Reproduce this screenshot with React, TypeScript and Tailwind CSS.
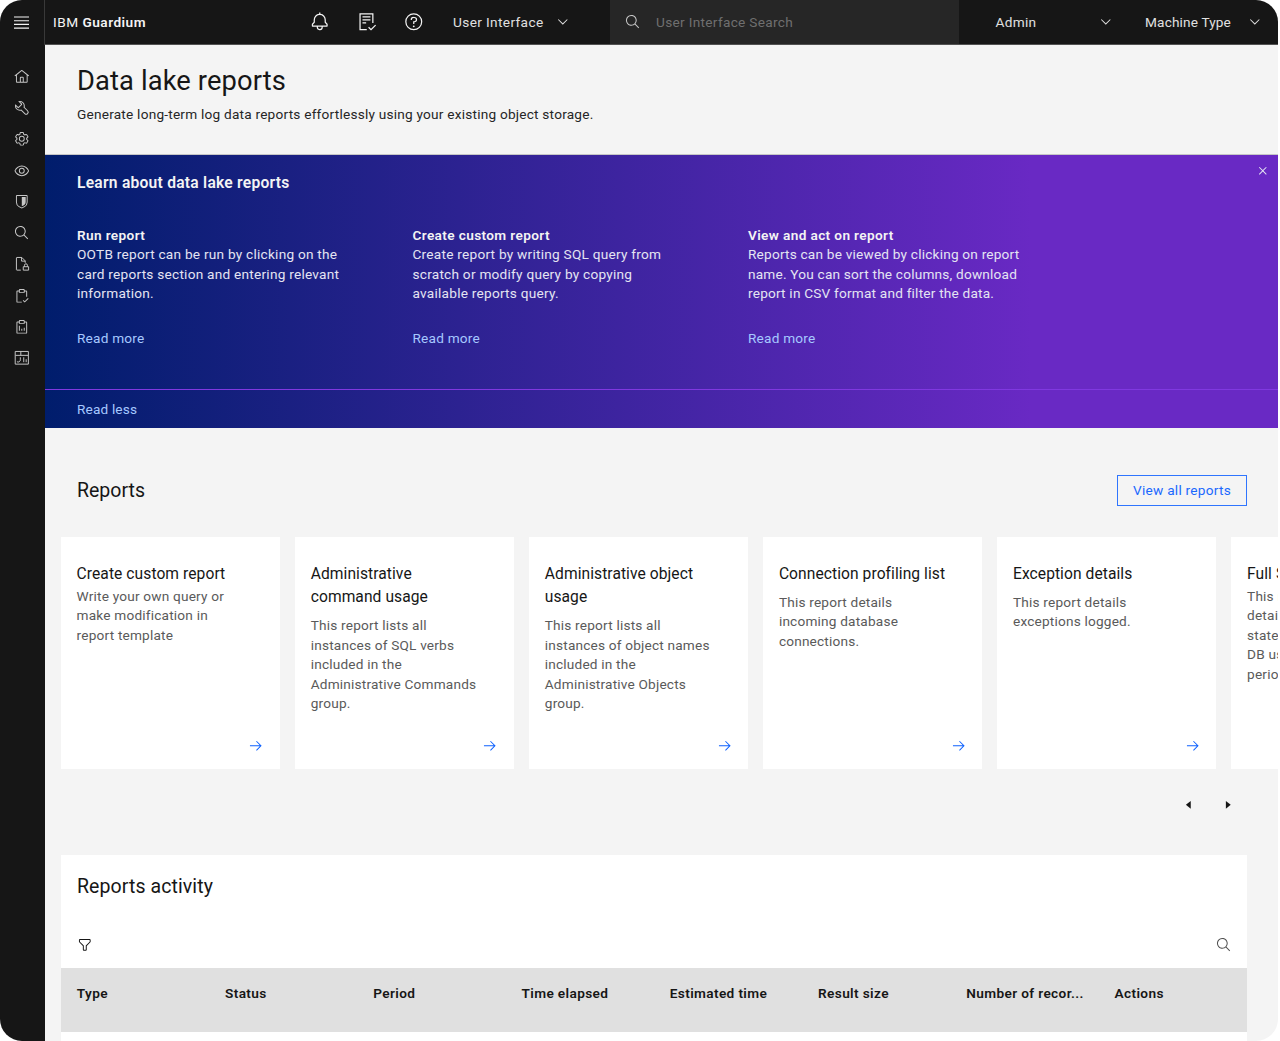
import type { ReactNode } from "react";

interface Report {
  title: string;
  description: string;
  tight?: boolean;
}

const lessons = [
  {
    title: "Run report",
    body: ["OOTB report can be run by clicking on the", "card reports section and entering relevant", "information."],
    bodyTracking: "tracking-[0.24px]",
  },
  {
    title: "Create custom report",
    body: ["Create report by writing SQL query from", "scratch or modify query by copying", "available reports query."],
    bodyTracking: "tracking-[0.24px]",
  },
  {
    title: "View and act on report",
    body: ["Reports can be viewed by clicking on report", "name. You can sort the columns, download", "report in CSV format and filter the data."],
    bodyTracking: "tracking-[0.2px]",
  },
];

const reports: Report[] = [
  { title: "Create custom report", description: "Write your own query or make modification in report template", tight: true },
  {
    title: "Administrative command usage",
    description: "This report lists all instances of SQL verbs included in the Administrative Commands group.",
  },
  {
    title: "Administrative object usage",
    description: "This report lists all instances of object names included in the Administrative Objects group.",
  },
  { title: "Connection profiling list", description: "This report details incoming database connections." },
  { title: "Exception details", description: "This report details exceptions logged." },
  {
    title: "Full SQL by user",
    description: "This report shows the details of all the full SQL statements run by each DB user in the selected period.",
    tight: true,
  },
];

const columns = ["Type", "Status", "Period", "Time elapsed", "Estimated time", "Result size", "Number of recor...", "Actions"];

function Icon({ className = "size-[15.6px]", children }: { className?: string; children: ReactNode }) {
  return (
    <svg viewBox="0 0 32 32" fill="currentColor" className={`shrink-0 ${className}`} aria-hidden="true">
      {children}
    </svg>
  );
}

const SearchIcon = ({ className }: { className?: string }) => (
  <Icon className={className}>
    <path d="M29,27.5859l-7.5521-7.5521a11.0177,11.0177,0,1,0-1.4141,1.4141L27.5859,29ZM4,13a9,9,0,1,1,9,9A9.01,9.01,0,0,1,4,13Z" />
  </Icon>
);

const ChevronDown = () => (
  <Icon>
    <path d="M16 22 6 12 7.4 10.6 16 19.2 24.6 10.6 26 12z" />
  </Icon>
);

const navIcons: { name: string; icon: ReactNode }[] = [
  {
    name: "Home",
    icon: (
      <path d="M16.6123,2.2138a1.01,1.01,0,0,0-1.2427,0L1,13.4194l1.2427,1.5717L4,13.6208V26a2.0041,2.0041,0,0,0,2,2H26a2.0037,2.0037,0,0,0,2-2V13.63L29.7573,15,31,13.4282ZM18,26H14V18h4Zm2,0V18a2.0023,2.0023,0,0,0-2-2H14a2.002,2.002,0,0,0-2,2v8H6V12.0615l10-7.79,10,7.8005V26Z" />
    ),
  },
  {
    name: "Setup",
    icon: (
      <path d="M12.1,2A9.8,9.8,0,0,0,8.5,2.7l6.1,6.1-5.8,5.8L2.7,8.5A9.8,9.8,0,0,0,2,12.1,10.14,10.14,0,0,0,12.1,22.2a10.9,10.9,0,0,0,2.6-.3l6.7,6.7a5,5,0,0,0,7.2-7.2l-6.7-6.7a10.9,10.9,0,0,0,.3-2.6A10.14,10.14,0,0,0,12.1,2Zm8,10.1a7.61,7.61,0,0,1-.3,2.1l-.3,1.1.8.8,6.7,6.7a2.77,2.77,0,0,1,.9,2.1A2.9,2.9,0,0,1,27,27a3,3,0,0,1-4.2,0l-6.7-6.7-.8-.8-1.1.3a7.61,7.61,0,0,1-2.1.3,8.27,8.27,0,0,1-5.7-2.3A7.63,7.63,0,0,1,4,12.7l3.4,3.4a1.95,1.95,0,0,0,2.8,0l5.9-5.9a1.95,1.95,0,0,0,0-2.8L12.7,4a7.63,7.63,0,0,1,5,2.4A8,8,0,0,1,20.1,12.1Z" />
    ),
  },
  {
    name: "Manage",
    icon: (
      <>
        <path d="M27,16.76c0-.25,0-.5,0-.76s0-.51,0-.77l1.92-1.68A2,2,0,0,0,29.3,11L26.94,7a2,2,0,0,0-1.73-1,2,2,0,0,0-.64.1l-2.43.82a11.35,11.35,0,0,0-1.31-.75l-.51-2.52a2,2,0,0,0-2-1.61H13.64a2,2,0,0,0-2,1.61l-.51,2.52a11.48,11.48,0,0,0-1.32.75L7.43,6.06A2,2,0,0,0,6.79,6,2,2,0,0,0,5.06,7L2.7,11a2,2,0,0,0,.41,2.51L5,15.24c0,.25,0,.5,0,.76s0,.51,0,.77L3.11,18.45A2,2,0,0,0,2.7,21L5.06,25a2,2,0,0,0,1.73,1,2,2,0,0,0,.64-.1l2.43-.82a11.35,11.35,0,0,0,1.31.75l.51,2.52a2,2,0,0,0,2,1.61h4.72a2,2,0,0,0,2-1.61l.51-2.52a11.48,11.48,0,0,0,1.32-.75l2.42.82a2,2,0,0,0,.64.1,2,2,0,0,0,1.73-1L29.3,21a2,2,0,0,0-.41-2.51ZM25.21,24l-3.43-1.16a8.86,8.86,0,0,1-2.71,1.57L18.36,28H13.64l-.71-3.55a9.36,9.36,0,0,1-2.7-1.57L6.79,24,4.43,20l2.72-2.4a8.9,8.9,0,0,1,0-3.13L4.43,12,6.79,8l3.43,1.16a8.86,8.86,0,0,1,2.71-1.57L13.64,4h4.72l.71,3.55a9.36,9.36,0,0,1,2.7,1.57L25.21,8,27.57,12l-2.72,2.4a8.9,8.9,0,0,1,0,3.13L27.57,20Z" />
        <path d="M16,22a6,6,0,1,1,6-6A5.94,5.94,0,0,1,16,22Zm0-10a3.91,3.91,0,0,0-4,4,3.91,3.91,0,0,0,4,4,3.91,3.91,0,0,0,4-4A3.91,3.91,0,0,0,16,12Z" />
      </>
    ),
  },
  {
    name: "Discover",
    icon: (
      <>
        <path d="M30.94,15.66A16.69,16.69,0,0,0,16,5,16.69,16.69,0,0,0,1.06,15.66a1,1,0,0,0,0,.68A16.69,16.69,0,0,0,16,27,16.69,16.69,0,0,0,30.94,16.34,1,1,0,0,0,30.94,15.66ZM16,25c-5.3,0-10.9-3.93-12.93-9C5.1,10.93,10.7,7,16,7s10.9,3.93,12.93,9C26.9,21.07,21.3,25,16,25Z" />
        <path d="M16,10a6,6,0,1,0,6,6A6,6,0,0,0,16,10Zm0,10a4,4,0,1,1,4-4A4,4,0,0,1,16,20Z" />
      </>
    ),
  },
  {
    name: "Harden",
    icon: (
      <>
        <path d="M16,30,9.8242,26.7071A10.9818,10.9818,0,0,1,4,17V4A2.0021,2.0021,0,0,1,6,2H26a2.0021,2.0021,0,0,1,2,2V17a10.9818,10.9818,0,0,1-5.8242,9.7071ZM6,4V17a8.9852,8.9852,0,0,0,4.7656,7.9423L16,27.7333l5.2344-2.791A8.9858,8.9858,0,0,0,26,17V4Z" />
        <path d="M16,25.2769V6h8V16.8051a7,7,0,0,1-3.7,6.1731Z" />
      </>
    ),
  },
  {
    name: "Investigate",
    icon: (
      <path d="M29,27.5859l-7.5521-7.5521a11.0177,11.0177,0,1,0-1.4141,1.4141L27.5859,29ZM4,13a9,9,0,1,1,9,9A9.01,9.01,0,0,1,4,13Z" />
    ),
  },
  {
    name: "Protect",
    icon: (
      <g fill="none" stroke="currentColor" strokeWidth="2">
        <path d="M14 29H6a1 1 0 0 1-1-1V4a1 1 0 0 1 1-1h10l7 7v4M15.5 3v7.5H23" />
        <path d="M19 22h11v7H19zM21.5 22v-3a3 3 0 0 1 6 0v3" />
      </g>
    ),
  },
  {
    name: "Comply",
    icon: (
      <>
        <path d="M22,27.18l-2.59-2.59L18,26l4,4,8-8-1.41-1.41Z" />
        <path d="M25,5H22V4a2,2,0,0,0-2-2H12a2,2,0,0,0-2,2V5H7A2,2,0,0,0,5,7V28a2,2,0,0,0,2,2h9V28H7V7h3v3H22V7h3V18h2V7A2,2,0,0,0,25,5ZM20,8H12V4h8Z" />
      </>
    ),
  },
  {
    name: "Reports",
    icon: (
      <>
        <path d="M15 20h2v4h-2zM20 18h2v6h-2zM10 14h2v10h-2z" />
        <path d="M25,5H22V4a2,2,0,0,0-2-2H12a2,2,0,0,0-2,2V5H7A2,2,0,0,0,5,7V28a2,2,0,0,0,2,2H25a2,2,0,0,0,2-2V7A2,2,0,0,0,25,5ZM12,4h8V8H12ZM25,28H7V7h3v3H22V7h3Z" />
      </>
    ),
  },
  {
    name: "My dashboards",
    icon: (
      <g fill="none" stroke="currentColor" strokeWidth="2">
        <path d="M2.5 3h27v26h-27zM3 11h26M14 3v8" />
        <path d="M20 15v10M25 19v6M13 15v5a4.5 4.5 0 0 1-7 4" />
      </g>
    ),
  },
];

function SideNav() {
  return (
    <nav className="flex w-[45px] shrink-0 flex-col bg-[#161616] text-[#c6c6c6]">
      <button className="flex h-[45px] w-full items-center border-r border-[#393939] pl-[14px] text-[#f4f4f4]">
        <svg viewBox="0 0 15 13" className="h-[13px] w-[15px]" stroke="currentColor" strokeWidth="1.1" aria-hidden="true">
          <path d="M0 1h15M0 4.7h15M0 8.4h15M0 12.1h15" />
        </svg>
      </button>
      <div className="flex flex-col pt-4 pl-[14px]">
        {navIcons.map(({ name, icon }) => (
          <button key={name} aria-label={name} className="flex h-[31.25px] items-center">
            <Icon>{icon}</Icon>
          </button>
        ))}
      </div>
    </nav>
  );
}

function Header() {
  return (
    <header className="flex h-[45px] items-stretch border-b border-[#525252] bg-[#161616] text-[13.65px] text-[#e0e0e0]">
      <div className="flex w-[265px] items-center pl-2 text-[#f4f4f4]">
        <span className="w-[29.5px] tracking-[0.5px]">IBM</span>
        <span className="font-semibold tracking-[0.47px]">Guardium</span>
      </div>
      <div className="flex w-[143px] items-center gap-[27.5px] text-[#f4f4f4]">
        <Icon className="size-[19.5px]">
          <path d="M28.7071,19.293,26,16.5859V13a10.0136,10.0136,0,0,0-9-9.9492V1H15V3.0508A10.0136,10.0136,0,0,0,6,13v3.5859L3.2929,19.293A1,1,0,0,0,3,20v3a1,1,0,0,0,1,1h7v.7768a5.152,5.152,0,0,0,4.5,5.1987A5.0057,5.0057,0,0,0,21,25V24h7a1,1,0,0,0,1-1V20A1,1,0,0,0,28.7071,19.293ZM19,25a3,3,0,0,1-6,0V24h6Zm8-3H5V20.4141L7.707,17.707A1,1,0,0,0,8,17V13a8,8,0,0,1,16,0v4a1,1,0,0,0,.293.707L27,20.4141Z" />
        </Icon>
        <Icon className="size-[19.5px]">
          <g fill="none" stroke="currentColor" strokeWidth="2">
            <path d="M16 29H5V3h21v15M9 8h13M9 13h13M9 18h6" />
            <path d="M19 25l4 4 7.5-7.5" />
          </g>
        </Icon>
        <Icon className="size-[19.5px]">
          <path d="M16,2A14,14,0,1,0,30,16,14,14,0,0,0,16,2Zm0,26A12,12,0,1,1,28,16,12,12,0,0,1,16,28Z" />
          <path d="M17,8H15.5A4.49,4.49,0,0,0,11,12.5V13h2v-.5A2.5,2.5,0,0,1,15.5,10H17a2.5,2.5,0,0,1,0,5H15v4.5h2V17a4.5,4.5,0,0,0,0-9Z" />
          <circle cx="16" cy="23.5" r="1.5" />
        </Icon>
      </div>
      <div className="flex w-[156.5px] items-center gap-[11.5px]">
        <span className="tracking-[0.37px]">User Interface</span>
        <ChevronDown />
      </div>
      <div className="flex w-[349px] items-center gap-4 bg-[#262626] pl-[15px]">
        <SearchIcon className="size-[15.6px] text-[#c6c6c6]" />
        <span className="tracking-[0.3px] text-[#6f6f6f]">User Interface Search</span>
      </div>
      <div className="flex w-[155px] items-center justify-between pl-[37px]">
        <span className="tracking-[0.3px]">Admin</span>
        <ChevronDown />
      </div>
      <div className="flex flex-1 items-center justify-between pr-[15px] pl-[31.5px]">
        <span className="tracking-[0.15px]">Machine Type</span>
        <ChevronDown />
      </div>
    </header>
  );
}

function LearnBanner() {
  return (
    <section className="flex h-[273px] flex-col bg-linear-to-r/srgb from-[#001d6c] to-[#6929c4] to-80% text-[13.65px] text-[#e4e4f2]">
      <div className="flex h-[235px] flex-col border-b border-[#8038e0] pl-8">
        <div className="flex items-start justify-between pt-2 pr-[7px]">
          <h2 className="mt-2 text-[15.6px] leading-[24px] font-semibold tracking-[0.25px] text-[#f4f4f4]">Learn about data lake reports</h2>
          <Icon>
            <path d="M17.4141 16 24 9.4141 22.5859 8 16 14.5859 9.4143 8 8 9.4141 14.5859 16 8 22.5859 9.4143 24 16 17.4141 22.5859 24 24 22.5859z" />
          </Icon>
        </div>
        <div className="mt-[30.5px] flex">
          {lessons.map((lesson) => (
            <div key={lesson.title} className="w-[335.5px] leading-[19.5px]">
              <h3 className="font-semibold tracking-[0.36px] text-[#f4f4f4]">{lesson.title}</h3>
              <p className={lesson.bodyTracking}>
                {lesson.body.map((line) => (
                  <span key={line} className="block">{line}</span>
                ))}
              </p>
              <a className="mt-[25.5px] block tracking-[0.21px] text-[#a6c8ff]">Read more</a>
            </div>
          ))}
        </div>
      </div>
      <a className="flex flex-1 items-center pl-8 tracking-[0.15px] text-[#a6c8ff]">Read less</a>
    </section>
  );
}

function ReportCard({ report }: { report: Report }) {
  return (
    <article className="flex w-[218.5px] shrink-0 flex-col bg-white px-[15.6px] pt-[25.5px] pb-[15.6px]">
      <h3 className="pr-5 text-[15.6px] leading-[23.4px] tracking-[0.07px] text-[#161616]">{report.title}</h3>
      <p className={`${report.tight ? "mt-px pr-7" : "mt-[7px] pr-4"} text-[13.65px] leading-[19.5px] tracking-[0.19px] text-[#5a5a5a]`}>
        {report.description}
      </p>
      <Icon className="mt-auto size-[15.6px] self-end text-[#0f62fe]">
        <path d="M18 6 16.57 7.393 24.15 15 4 15 4 17 24.15 17 16.57 24.573 18 26 28 16z" />
      </Icon>
    </article>
  );
}

function ReportsActivity() {
  return (
    <section className="mr-[31px] ml-4 flex h-[186px] flex-col bg-white text-[#161616]">
      <h2 className="px-4 pt-[18px] text-[19.5px] leading-[27px] tracking-[0.09px]">Reports activity</h2>
      <div className="mt-[25px] mb-1 flex h-[39px] items-center justify-between pr-[15px] pl-[15.5px]">
        <Icon>
          <path d="M18,28H14a2,2,0,0,1-2-2V18.41L4.59,11A2,2,0,0,1,4,9.59V6A2,2,0,0,1,6,4H26a2,2,0,0,1,2,2V9.59A2,2,0,0,1,27.41,11L20,18.41V26A2,2,0,0,1,18,28ZM6,6V9.59l8,8V26h4V17.59l8-8V6Z" />
        </Icon>
        <SearchIcon className="size-[15.6px] text-[#525252]" />
      </div>
      <div className="grid h-16 grid-cols-8 bg-[#e0e0e0] pt-[15px]">
        {columns.map((column) => (
          <div key={column} className="pl-[15.8px] text-[13.65px] leading-[20px] font-semibold tracking-[0.36px] whitespace-nowrap">
            {column}
          </div>
        ))}
      </div>
    </section>
  );
}

export default function App() {
  return (
    <div className="h-[1041px] overflow-hidden bg-white font-['Roboto',sans-serif]">
      <div className="flex h-[1041px] w-[1278px] overflow-hidden rounded-[22px] bg-[#f4f4f4]">
        <SideNav />
        <main className="flex min-w-0 flex-1 flex-col">
          <Header />
          <div className="h-[110px] border-b border-[#c6c6c6] pl-8 text-[#161616]">
            <h1 className="pt-[19px] text-[27.3px] leading-[35px] tracking-[0.12px]">Data lake reports</h1>
            <p className="mt-[5px] text-[13.65px] leading-[20px] tracking-[0.217px] text-[#262626]">
              Generate long-term log data reports effortlessly using your existing object storage.
            </p>
          </div>
          <LearnBanner />
          <div className="mt-[47px] flex h-[31px] items-center justify-between pr-[31px] pl-8">
            <h2 className="text-[19.5px] text-[#161616]">Reports</h2>
            <button className="h-[31px] w-[130px] border border-[#2f75fe] text-[13.65px] tracking-[0.25px] text-[#1b69fe]">View all reports</button>
          </div>
          <div className="mt-[31px] flex h-[232px] gap-[15.6px] overflow-hidden pl-4">
            {reports.map((report) => (
              <ReportCard key={report.title} report={report} />
            ))}
          </div>
          <div className="mt-4 mb-[31px] flex h-[39px] justify-end pr-[31px] text-[#161616]">
            <button className="flex w-[39px] items-center justify-center">
              <Icon>
                <path d="M20 24 10 16 20 8z" />
              </Icon>
            </button>
            <button className="flex w-[39px] items-center justify-center">
              <Icon>
                <path d="M12 8 22 16 12 24z" />
              </Icon>
            </button>
          </div>
          <ReportsActivity />
        </main>
      </div>
    </div>
  );
}
